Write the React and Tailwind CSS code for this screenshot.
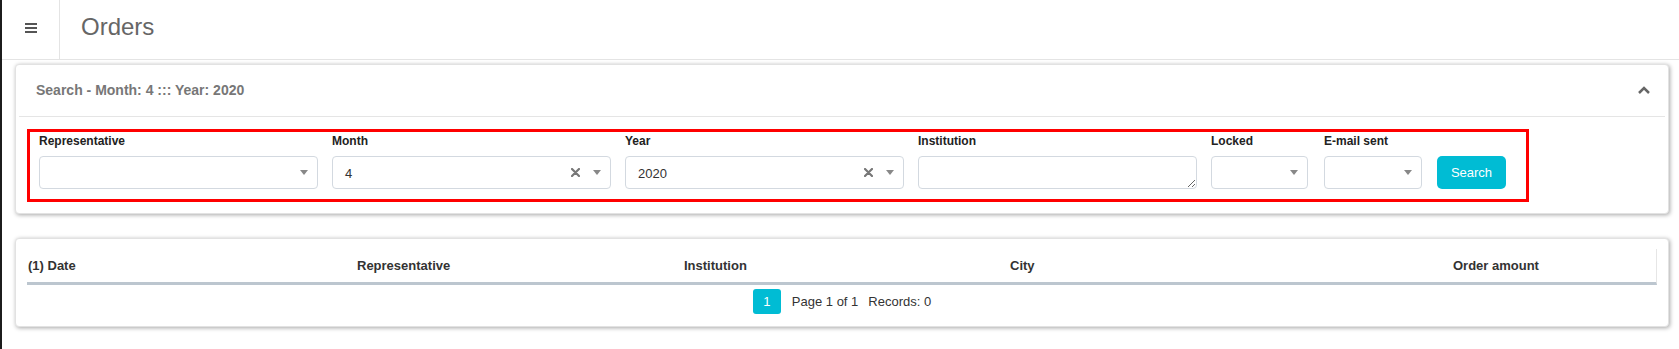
import React from 'react';

// small gray caret used by the select boxes
const Caret = () => (
  <svg width="8" height="5" viewBox="0 0 8 5" className="shrink-0">
    <polygon points="0,0 8,0 4,5" fill="#888" />
  </svg>
);

const Clear = () => (
  <svg width="9" height="9" viewBox="0 0 9 9" className="mr-[13px] shrink-0">
    <path d="M1 1L8 8M8 1L1 8" stroke="#777" strokeWidth="2.2" strokeLinecap="round" />
  </svg>
);

const SelectBox = ({ value, clearable = false, className = '' }) => (
  <div className={`flex h-[33px] items-center rounded-[4px] border border-[#d3d9e0] bg-white pl-[12px] pr-[9px] ${className}`}>
    <span className="flex-1 pt-[2px] text-[13px] leading-[15px] text-[#333]">{value}</span>
    {clearable && <Clear />}
    <Caret />
  </div>
);

const Field = ({ label, className = '', children }) => (
  <div className={`flex flex-col ${className}`}>
    <label className="mb-[8px] text-[12px] font-bold leading-[14px] text-[#222]">{label}</label>
    {children}
  </div>
);

const columns = [
  { title: '(1) Date', w: 'w-[329px]' },
  { title: 'Representative', w: 'w-[327px]' },
  { title: 'Institution', w: 'w-[326px]' },
  { title: 'City', w: 'w-[443px]' },
  { title: 'Order amount', w: 'flex-1' },
];

export default function App() {
  return (
    <div className="min-h-[349px] w-[1679px] border-l-2 border-[#1c1c1c] bg-white font-['Liberation_Sans',Arial,sans-serif] text-[#333]">
      {/* Top bar */}
      <header className="flex h-[60px] border-b border-[#e4e4e4]">
        <div className="flex w-[58px] items-center justify-center border-r border-[#e4e4e4] pb-[3px]">
          <svg width="12" height="10" viewBox="0 0 12 10">
            <rect x="0" y="0" width="12" height="2" fill="#555" />
            <rect x="0" y="4" width="12" height="2" fill="#555" />
            <rect x="0" y="8" width="12" height="2" fill="#555" />
          </svg>
        </div>
        <h1 className="flex items-center pb-[5px] pl-[21px] text-[24px] leading-none text-[#666]">Orders</h1>
      </header>

      {/* Search card */}
      <section className="ml-[13px] mr-[10px] mt-[4px] rounded-[4px] border border-[#e2e2e2] bg-white shadow-[1px_1px_4px_rgba(0,0,0,0.35)]">
        <div className="flex h-[51px] items-center justify-between pb-px pl-[20px] pr-[18px]">
          <span className="text-[14px] font-bold text-[#777]">Search - Month: 4 ::: Year: 2020</span>
          <svg width="12" height="8" viewBox="0 0 12 8">
            <polyline points="1,7 6,2 11,7" fill="none" stroke="#666" strokeWidth="2.5" />
          </svg>
        </div>
        <div className="mx-[3px] h-px bg-[#e5e5e5]" />
        <div className="px-[11px] pb-[11px] pt-[11px]">
          <div className="inline-flex gap-[14px] border-[3px] border-[#ff0000] pb-[10px] pl-[9px] pr-[20px] pt-[2px]">
            <Field label="Representative">
              <SelectBox className="w-[279px]" />
            </Field>
            <Field label="Month">
              <SelectBox className="w-[279px]" value="4" clearable />
            </Field>
            <Field label="Year">
              <SelectBox className="w-[279px]" value="2020" clearable />
            </Field>
            <Field label="Institution">
              <textarea className="h-[33px] w-[279px] rounded-[4px] border border-[#d3d9e0] bg-white px-[12px] text-[13px] outline-none" />
            </Field>
            <Field label="Locked">
              <SelectBox className="w-[97px]" />
            </Field>
            <Field label="E-mail sent" className="ml-[2px]">
              <SelectBox className="w-[98px]" />
            </Field>
            <button className="ml-px h-[33px] w-[69px] self-end rounded-[5px] bg-[#00bcd4] text-[13px] text-white">Search</button>
          </div>
        </div>
      </section>

      {/* Results card */}
      <section className="ml-[13px] mr-[10px] mt-[24px] rounded-[4px] border border-[#e2e2e2] bg-white px-[11px] pb-[12px] pt-[10px] shadow-[1px_1px_4px_rgba(0,0,0,0.35)]">
        <div className="flex h-[36px] items-center border-b-[3px] border-r border-b-[#bcc6cf] border-r-[#e6e6e6]">
          {columns.map((c) => (
            <div key={c.title} className={`${c.w} pl-px text-[13px] font-bold text-[#333]`}>
              {c.title}
            </div>
          ))}
        </div>
        <div className="flex items-center justify-center pt-[4px] text-[13px] text-[#333]">
          <span className="flex h-[25px] w-[28px] items-center justify-center rounded-[3px] bg-[#00bcd4] text-white">1</span>
          <span className="ml-[11px]">Page 1 of 1</span>
          <span className="ml-[10px]">Records: 0</span>
        </div>
      </section>
    </div>
  );
}
